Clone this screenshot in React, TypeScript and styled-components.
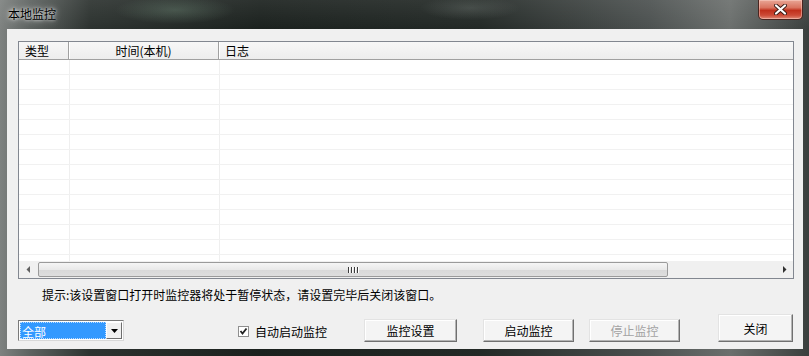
import styled, { createGlobalStyle } from "styled-components";

const GlobalStyle = createGlobalStyle`
  html, body {
    margin: 0;
    padding: 0;
    background: #1c211f;
  }
  body {
    font-family: "Noto Sans CJK SC", "Liberation Sans", sans-serif;
    font-size: 12px;
    color: #000;
  }
`;

const Window = styled.div`
  width: 809px;
  height: 356px;
  box-sizing: border-box;
  display: flex;
  flex-direction: column;
  padding: 0 6px 7px 7px;
  background:
    radial-gradient(ellipse 60px 14px at 175px 10px, rgba(120, 150, 130, 0.35), transparent),
    radial-gradient(ellipse 50px 12px at 470px 8px, rgba(140, 150, 145, 0.25), transparent),
    linear-gradient(180deg, rgba(255, 255, 255, 0.08) 0px, transparent 30px),
    linear-gradient(90deg, #7e8280 0px, #5d6260 30px, #2c322f 90px, #1b211e 260px, #232926 480px, #4c5150 650px, #6b6f6d 730px, #3a3f3d 809px);
`;

const TitleBar = styled.div`
  height: 29px;
  display: flex;
  justify-content: space-between;
  align-items: flex-start;
`;

const Title = styled.span`
  margin-top: 6px;
  padding-left: 1px;
  font-size: 12px;
  line-height: 16px;
  color: #000;
  text-shadow: 0 0 6px rgba(255, 255, 255, 0.9), 0 0 3px rgba(255, 255, 255, 0.8);
`;

const CloseButton = styled.div`
  width: 45px;
  height: 20px;
  box-sizing: border-box;
  display: flex;
  align-items: center;
  justify-content: center;
  border: 1px solid #4a2520;
  border-top: none;
  border-radius: 0 0 5px 5px;
  background: linear-gradient(180deg, #e9a696 0%, #d9735f 40%, #c0301c 55%, #cc4a36 80%, #e08a76 100%);
  box-shadow: inset 0 0 0 1px rgba(255, 220, 210, 0.45);
`;

const Client = styled.div`
  flex: 1;
  display: flex;
  flex-direction: column;
  background: #f0f0f0;
  padding: 12px 9px 7px 11px;
`;

const ListView = styled.div`
  height: 238px;
  box-sizing: border-box;
  display: flex;
  flex-direction: column;
  border: 1px solid #828790;
  background: #fff;
  overflow: hidden;
`;

const HeaderRow = styled.div`
  height: 18px;
  flex: none;
  display: grid;
  grid-template-columns: 50px 150px 1fr;
  background: linear-gradient(180deg, #f7f7f7 0%, #ededed 100%);
  border-bottom: 1px solid #a0a0a0;
  box-sizing: border-box;
`;

const HeaderCell = styled.div<{ $align?: string }>`
  display: flex;
  align-items: center;
  justify-content: ${(p) => p.$align || "flex-start"};
  padding-left: ${(p) => (p.$align === "center" ? "0" : "6px")};
  line-height: 16px;
  border-right: 1px solid #a0a0a0;
  box-shadow: 1px 0 0 #fff;
  &:last-child {
    border-right: none;
    box-shadow: none;
  }
`;

const Rows = styled.div`
  flex: 1;
  overflow: hidden;
`;

const Row = styled.div`
  height: 14px;
  display: grid;
  grid-template-columns: 51px 150px 1fr;
  border-bottom: 1px solid #f1f1f1;
`;

const Cell = styled.div`
  border-right: 1px solid #efefef;
  &:last-child {
    border-right: none;
  }
`;

const HScroll = styled.div`
  height: 17px;
  flex: none;
  display: flex;
  align-items: center;
  background: #f0f0f0;
`;

const ArrowButton = styled.div`
  width: 17px;
  height: 17px;
  display: flex;
  align-items: center;
  justify-content: center;
`;

const Track = styled.div`
  flex: 1;
  height: 17px;
  display: flex;
  align-items: center;
`;

const Thumb = styled.div`
  width: 630px;
  height: 15px;
  margin-left: 2px;
  box-sizing: border-box;
  display: flex;
  align-items: center;
  justify-content: center;
  border: 1px solid #9a9a9a;
  border-radius: 2px;
  background: linear-gradient(180deg, #f5f5f5 0%, #e9e9e9 50%, #d8d8d8 51%, #dedede 100%);
`;

const Grip = styled.div`
  display: flex;
  gap: 1px;
  span {
    width: 1px;
    height: 6px;
    background: #3c3c3c;
    box-shadow: 1px 0 0 #fff;
    margin-right: 1px;
  }
`;

const Hint = styled.div`
  height: 16px;
  line-height: 16px;
  margin-top: 8px;
  padding-left: 24px;
  white-space: nowrap;
`;

const BottomRow = styled.div`
  height: 28px;
  margin-top: 11px;
  display: flex;
  align-items: flex-end;
`;

const Combo = styled.div`
  width: 106px;
  height: 21px;
  box-sizing: border-box;
  display: flex;
  padding: 1px;
  margin-bottom: 1px;
  background: #fff;
  border: 1px solid;
  border-color: #7a7a7a #d8d8d8 #d8d8d8 #7a7a7a;
`;

const ComboField = styled.div`
  flex: 1;
  background: #3399ff;
  color: #fff;
  line-height: 17px;
  padding-left: 1px;
  border: 1px dotted #bcdcff;
  box-sizing: border-box;
`;

const ComboButton = styled.div`
  width: 16px;
  box-sizing: border-box;
  display: flex;
  align-items: center;
  justify-content: center;
  background: #f0f0f0;
  border: 1px solid;
  border-color: #fff #6e6e6e #6e6e6e #fff;
`;

const CheckGroup = styled.label<{ $ml: number }>`
  width: 126px;
  margin-left: ${(p) => p.$ml}px;
  margin-bottom: 3px;
  display: flex;
  align-items: center;
  gap: 6px;
  height: 16px;
`;

const CheckBox = styled.span`
  width: 11px;
  height: 11px;
  box-sizing: border-box;
  display: flex;
  align-items: center;
  justify-content: center;
  background: #fff;
  border: 1px solid #8f8f8f;
`;

const Button = styled.div<{ $w: number; $ml: number; $h?: number; $disabled?: boolean }>`
  width: ${(p) => p.$w}px;
  height: ${(p) => p.$h || 23}px;
  margin-left: ${(p) => p.$ml}px;
  box-sizing: border-box;
  display: flex;
  align-items: center;
  justify-content: center;
  background: #f4f4f4;
  color: ${(p) => (p.$disabled ? "#a3a3a3" : "#000")};
  border: 1px solid;
  border-color: #e3e3e3 #707070 #707070 #e3e3e3;
  box-shadow: inset -1px -1px 0 #b4b4b4, inset 1px 1px 0 #fff;
`;

const rows = Array.from({ length: 15 });

export default function App() {
  return (
    <>
      <GlobalStyle />
      <Window>
        <TitleBar>
          <Title>本地监控</Title>
          <CloseButton>
            <svg width="13" height="11" viewBox="0 0 13 11">
              <path
                d="M2 1.5 L11 9.5 M11 1.5 L2 9.5"
                stroke="#3a1a14"
                strokeWidth="4"
                strokeLinecap="round"
              />
              <path
                d="M2 1.5 L11 9.5 M11 1.5 L2 9.5"
                stroke="#fff"
                strokeWidth="2.2"
                strokeLinecap="round"
              />
            </svg>
          </CloseButton>
        </TitleBar>
        <Client>
          <ListView>
            <HeaderRow>
              <HeaderCell>类型</HeaderCell>
              <HeaderCell $align="center">时间(本机)</HeaderCell>
              <HeaderCell>日志</HeaderCell>
            </HeaderRow>
            <Rows>
              {rows.map((_, i) => (
                <Row key={i}>
                  <Cell />
                  <Cell />
                  <Cell />
                </Row>
              ))}
            </Rows>
            <HScroll>
              <ArrowButton>
                <svg width="4" height="7" viewBox="0 0 4 7">
                  <path d="M4 0 L0.5 3.5 L4 7 Z" fill="#606060" />
                </svg>
              </ArrowButton>
              <Track>
                <Thumb>
                  <Grip>
                    <span />
                    <span />
                    <span />
                    <span />
                  </Grip>
                </Thumb>
              </Track>
              <ArrowButton>
                <svg width="4" height="7" viewBox="0 0 4 7">
                  <path d="M0 0 L3.5 3.5 L0 7 Z" fill="#303030" />
                </svg>
              </ArrowButton>
            </HScroll>
          </ListView>
          <Hint>提示:该设置窗口打开时监控器将处于暂停状态，请设置完毕后关闭该窗口。</Hint>
          <BottomRow>
            <Combo>
              <ComboField>全部</ComboField>
              <ComboButton>
                <svg width="7" height="4" viewBox="0 0 7 4">
                  <path d="M0 0 L7 0 L3.5 4 Z" fill="#000" />
                </svg>
              </ComboButton>
            </Combo>
            <CheckGroup $ml={114}>
              <CheckBox>
                <svg width="9" height="9" viewBox="0 0 9 9">
                  <path d="M1.5 4 L3.5 6.5 L7.5 1.5" stroke="#222" strokeWidth="1.8" fill="none" />
                </svg>
              </CheckBox>
              自动启动监控
            </CheckGroup>
            <Button $w={93} $ml={0}>监控设置</Button>
            <Button $w={91} $ml={26}>启动监控</Button>
            <Button $w={91} $ml={15} $disabled>停止监控</Button>
            <Button $w={75} $ml={38} $h={28}>关闭</Button>
          </BottomRow>
        </Client>
      </Window>
    </>
  );
}
